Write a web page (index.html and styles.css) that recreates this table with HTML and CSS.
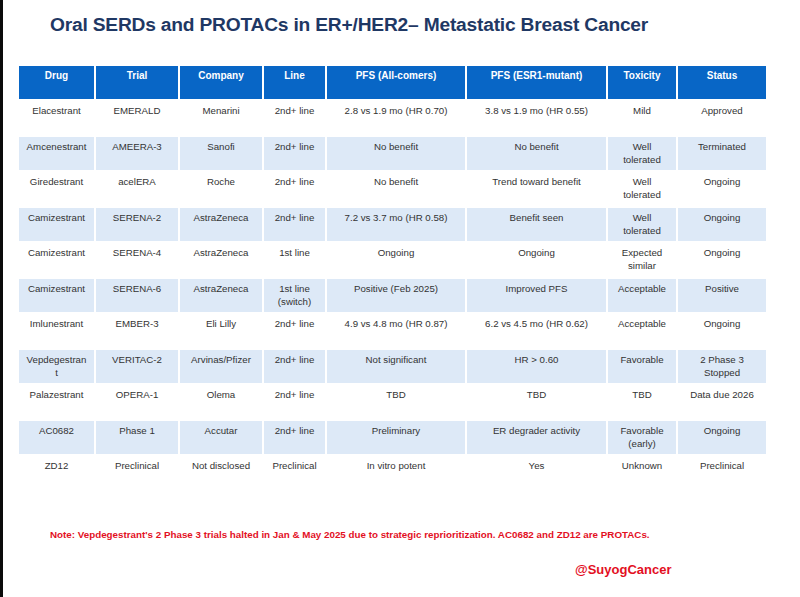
FILE: index.html
```html
<!DOCTYPE html>
<html lang="en">
<head>
<meta charset="utf-8">
<title>Oral SERDs and PROTACs</title>
<link rel="stylesheet" href="styles.css">
</head>
<body>
<div class="page">
  <div class="edge"></div>
  <main class="slide">
    <h1 class="title">Oral SERDs and PROTACs in ER+/HER2– Metastatic Breast Cancer</h1>
    <table class="grid">
      <colgroup>
        <col class="c-drug"><col class="c-trial"><col class="c-company"><col class="c-line">
        <col class="c-pfs"><col class="c-esr"><col class="c-tox"><col class="c-status">
      </colgroup>
      <thead>
        <tr class="head">
          <th>Drug</th><th>Trial</th><th>Company</th><th>Line</th>
          <th>PFS (All-comers)</th><th>PFS (ESR1-mutant)</th><th>Toxicity</th><th>Status</th>
        </tr>
      </thead>
      <tbody>
        <tr><td>Elacestrant</td><td>EMERALD</td><td>Menarini</td><td>2nd+ line</td><td>2.8 vs 1.9 mo (HR 0.70)</td><td>3.8 vs 1.9 mo (HR 0.55)</td><td>Mild</td><td>Approved</td></tr>
        <tr class="alt"><td>Amcenestrant</td><td>AMEERA-3</td><td>Sanofi</td><td>2nd+ line</td><td>No benefit</td><td>No benefit</td><td>Well<br>tolerated</td><td>Terminated</td></tr>
        <tr><td>Giredestrant</td><td>acelERA</td><td>Roche</td><td>2nd+ line</td><td>No benefit</td><td>Trend toward benefit</td><td>Well<br>tolerated</td><td>Ongoing</td></tr>
        <tr class="alt"><td>Camizestrant</td><td>SERENA-2</td><td>AstraZeneca</td><td>2nd+ line</td><td>7.2 vs 3.7 mo (HR 0.58)</td><td>Benefit seen</td><td>Well<br>tolerated</td><td>Ongoing</td></tr>
        <tr><td>Camizestrant</td><td>SERENA-4</td><td>AstraZeneca</td><td>1st line</td><td>Ongoing</td><td>Ongoing</td><td>Expected<br>similar</td><td>Ongoing</td></tr>
        <tr class="alt"><td>Camizestrant</td><td>SERENA-6</td><td>AstraZeneca</td><td>1st line<br>(switch)</td><td>Positive (Feb 2025)</td><td>Improved PFS</td><td>Acceptable</td><td>Positive</td></tr>
        <tr><td>Imlunestrant</td><td>EMBER-3</td><td>Eli Lilly</td><td>2nd+ line</td><td>4.9 vs 4.8 mo (HR 0.87)</td><td>6.2 vs 4.5 mo (HR 0.62)</td><td>Acceptable</td><td>Ongoing</td></tr>
        <tr class="alt"><td>Vepdegestran<br>t</td><td>VERITAC-2</td><td>Arvinas/Pfizer</td><td>2nd+ line</td><td>Not significant</td><td>HR &gt; 0.60</td><td>Favorable</td><td>2 Phase 3<br>Stopped</td></tr>
        <tr><td>Palazestrant</td><td>OPERA-1</td><td>Olema</td><td>2nd+ line</td><td>TBD</td><td>TBD</td><td>TBD</td><td>Data due 2026</td></tr>
        <tr class="alt"><td>AC0682</td><td>Phase 1</td><td>Accutar</td><td>2nd+ line</td><td>Preliminary</td><td>ER degrader activity</td><td>Favorable<br>(early)</td><td>Ongoing</td></tr>
        <tr><td>ZD12</td><td>Preclinical</td><td>Not disclosed</td><td>Preclinical</td><td>In vitro potent</td><td>Yes</td><td>Unknown</td><td>Preclinical</td></tr>
      </tbody>
    </table>
    <p class="note">Note: Vepdegestrant's 2 Phase 3 trials halted in Jan &amp; May 2025 due to strategic reprioritization. AC0682 and ZD12 are PROTACs.</p>
    <p class="handle">@SuyogCancer</p>
  </main>
</div>
</body>
</html>
```

FILE: styles.css
```css
html, body {
  margin: 0;
  padding: 0;
  background: #ffffff;
}

.page {
  display: flex;
  width: 800px;
  height: 597px;
  overflow: hidden;
}

.edge {
  width: 3px;
  flex: none;
  background: #0b0b0b;
}

.slide {
  flex: 1;
  display: flex;
  flex-direction: column;
  align-items: flex-start;
  padding-left: 14px;
  font-family: "Liberation Sans", Arial, sans-serif;
}

.title {
  margin: 13px 0 0 33px;
  font-size: 19.2px;
  line-height: 24px;
  font-weight: bold;
  color: #1f3864;
  letter-spacing: -0.2px;
  white-space: nowrap;
}

.grid {
  margin-top: 27px;
  width: 749px;
  table-layout: fixed;
  border-collapse: collapse;
  font-size: 9.7px;
  line-height: 13.3px;
  color: #333333;
}

.c-drug { width: 77px; }
.c-trial { width: 84px; }
.c-company { width: 84px; }
.c-line { width: 63px; }
.c-pfs { width: 140px; }
.c-esr { width: 141px; }
.c-tox { width: 70px; }
.c-status { width: 90px; }

.grid th,
.grid td {
  border: 2px solid #ffffff;
  padding: 3px 4px 0;
  text-align: center;
  vertical-align: top;
}

.grid th {
  background: #0866c6;
  color: #ffffff;
  font-weight: bold;
  font-size: 10px;
}

.grid .head {
  height: 35px;
}

.grid tbody tr {
  height: 35.5px;
}

.grid tr.alt td {
  background: #dde9f7;
}

.note {
  margin: 37px 0 0 33px;
  font-size: 9.8px;
  line-height: 12px;
  font-weight: bold;
  color: #e3101f;
  white-space: nowrap;
}

.handle {
  margin: 21px 0 0 558px;
  font-size: 13px;
  line-height: 16px;
  font-weight: bold;
  color: #e3101f;
}
```
